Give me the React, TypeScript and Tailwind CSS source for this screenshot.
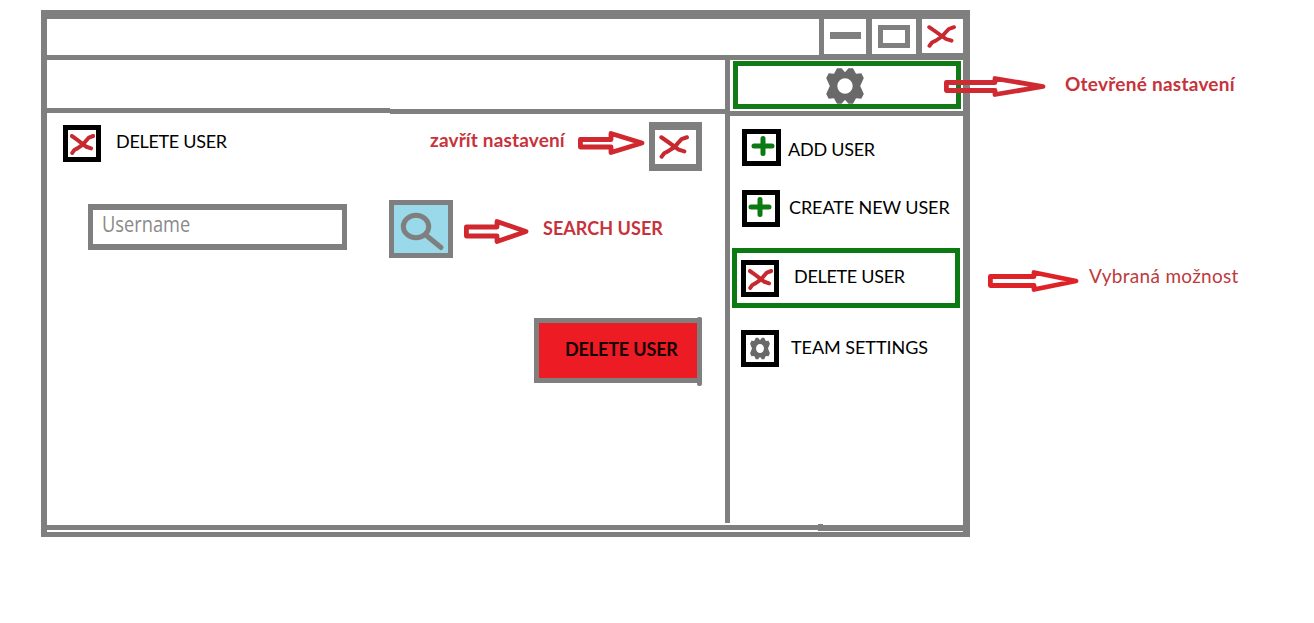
import React from "react";

function XMark({ className, width }: { className: string; width: number }) {
  return (
    <svg viewBox="0 0 29 23" preserveAspectRatio="none" className={className} fill="none" stroke="#c8282f" strokeWidth={width} strokeLinecap="round" strokeLinejoin="round">
      <path d="M2.2 2.200L8.500 6.500L15.500 11.500L19 14L24.500 15.700" />
      <path d="M27 2.200L21.800 4L18.500 7.500L15 11.500L9 15.500L5 17.500L2.500 20.800" />
    </svg>
  );
}

function Plus() {
  return (
    <svg viewBox="0 0 24 20" className="h-5 w-6" fill="none" stroke="#0b7a12" strokeWidth="5" strokeLinecap="round">
      <path d="M3 10H21M12 2.500V17.500" />
    </svg>
  );
}

const quarter = [
  [0, -13.8],
  [3.5, -17.8],
  [8, -17.8],
  [11, -12.2],
  [16.3, -12.8],
  [18.8, -8],
];

const gearPoints = [
  ...quarter,
  [15.2, 0],
  ...quarter.slice(1).reverse().map(([x, y]) => [x, -y]),
  [0, 13.8],
  ...quarter.slice(1).map(([x, y]) => [-x, -y]),
  [-15.2, 0],
  ...quarter.slice(1).reverse().map(([x, y]) => [-x, y]),
]
  .map(([x, y]) => `${20 + x} ${20 + y}`)
  .join("L");

function Gear({ className, hole }: { className: string; hole: number }) {
  return (
    <svg viewBox="1 1 38 38" preserveAspectRatio="none" className={className} fill="#696969" fillRule="evenodd">
      <path d={`M${gearPoints}ZM${20 - hole} 20a${hole} ${hole} 0 1 0 ${hole * 2} 0a${hole} ${hole} 0 1 0 ${-hole * 2} 0Z`} />
    </svg>
  );
}

function Arrow({ width, height, head, top, bottom, color, className }: { width: number; height: number; head: number; top: number; bottom: number; color: string; className: string }) {
  return (
    <svg width={width} height={height} className={`shrink-0 ${className}`} fill="none" stroke={color} strokeWidth="4.8" strokeLinejoin="round">
      <path d={`M2.4 ${top}H${head}V2.500L${width - 3} ${height / 2}L${head} ${height - 2.5}V${bottom}H2.400Z`} />
    </svg>
  );
}

function IconBox({ className, children }: { className: string; children: React.ReactNode }) {
  return <div className={`flex h-[37px] shrink-0 items-center justify-center border-[5px] border-black ${className}`}>{children}</div>;
}

function Label({ className, children }: { className: string; children: React.ReactNode }) {
  return <span className={`block origin-left whitespace-nowrap leading-[20px] ${className}`}>{children}</span>;
}

function TitleBar() {
  return (
    <div className="flex h-[41px] shrink-0 justify-end border-b-[5px] border-[#7f7f7f]">
      <div className="flex h-[36px] border-b border-l-[5px] border-[#7f7f7f]">
        <div className="flex w-[42px] justify-center pt-[13px]">
          <div className="h-[7px] w-[31px] bg-[#7f7f7f]" />
        </div>
        <div className="flex w-[50px] justify-center border-l-[6px] border-[#7f7f7f] pt-[6px]">
          <div className="h-[23px] w-[32px] border-[5px] border-[#7f7f7f]" />
        </div>
        <div className="w-[47px] border-b border-l-[6px] border-[#7f7f7f] pl-[5px] pt-[6px]">
          <XMark className="h-[23px] w-[29px]" width={3.9} />
        </div>
      </div>
    </div>
  );
}

function MainPanel() {
  return (
    <main className="flex w-[678px] flex-col">
      <div className="flex h-[53px] items-end">
        <div className="h-[5px] w-[343px] bg-[#7f7f7f]" />
        <div className="-mb-px h-[5px] flex-1 bg-[#7f7f7f]" />
      </div>
      <div className="flex items-start pl-4 pt-[9px]">
        <IconBox className="mt-[3px] w-[38px] pt-[1px]">
          <XMark className="h-[21px] w-[25px]" width={4.4} />
        </IconBox>
        <Label className="ml-[15px] mt-[9px] w-[314px] text-[18px] tracking-[-0.3px]">DELETE USER</Label>
        <Label className="mt-[8px] w-[148px] text-[19px] font-bold tracking-[0.15px] text-[#c8323a]">zavřít nastavení</Label>
        <Arrow width={67} height={24} head={33} top={8.5} bottom={16} color="#d0282e" className="mt-[9px]" />
        <div className="ml-[4px] h-[49px] w-[53px] border-x-[6px] border-b-[7px] border-t-[8px] border-[#7f7f7f] pl-[4px] pt-[5px]">
          <XMark className="h-[24px] w-[30px]" width={3.9} />
        </div>
      </div>
      <div className="mt-[29px] flex items-start pl-[41px]">
        <div className="mt-[4px] h-[46px] w-[259px] border-x-[5px] border-y-[6px] border-[#7f7f7f] pl-[9px]">
          <span className="block origin-left scale-x-[0.83] font-['Open_Sans','Noto_Sans',sans-serif] text-[22px] leading-[27px] text-[#8a8a8a]">Username</span>
        </div>
        <div className="ml-[42px] h-[58px] w-[64px] border-[5px] border-[#7f7f7f] bg-[#99d9ea]">
          <svg viewBox="0 0 54 48" className="h-[48px] w-[54px]" fill="none" stroke="#7f7f7f" strokeWidth="5">
            <ellipse cx="22" cy="21.500" rx="12.700" ry="11.200" />
            <path d="M33 31L47 42.500" strokeLinecap="round" />
          </svg>
        </div>
        <Arrow width={65} height={25} head={33} top={8} bottom={17} color="#d0282e" className="ml-[11px] mt-[19px]" />
        <Label className="ml-[14px] mt-[18px] text-[18px] font-bold tracking-[0.05px] text-[#c8323a]">SEARCH USER</Label>
      </div>
      <div className="relative ml-[487px] mt-[60px] flex h-[65px] w-[168px] items-start border-[5px] border-[#7f7f7f] bg-[#ed1c24] pl-[26px] pt-[16px]">
        <Label className="text-[18px] font-bold tracking-[-0.15px] text-[#160000]">DELETE USER</Label>
        <div className="absolute -right-[5px] -top-[6px] h-[69px] w-[5px] rounded-[2px] bg-[#7f7f7f]" />
      </div>
    </main>
  );
}

function Sidebar() {
  return (
    <aside className="flex w-[233px] flex-col">
      <div className="h-[51px] pl-[3px] pt-px">
        <div className="flex h-[48px] w-[228px] justify-center border-[5px] border-[#137a18] pt-px">
          <Gear className="-ml-[4px] h-[38px] w-[38px]" hole={7.7} />
        </div>
      </div>
      <div className="h-[5px] shrink-0 bg-[#7f7f7f]" />
      <div className="mt-[13px] flex items-start pl-3">
        <IconBox className="w-[39px] pb-[3px] pl-[2px]">
          <Plus />
        </IconBox>
        <Label className="ml-[7px] mt-[10px] text-[18px] tracking-[-0.25px]">ADD USER</Label>
      </div>
      <div className="mt-[24px] flex items-start pl-3">
        <IconBox className="w-[38px] pb-[3px] pr-[2px]">
          <Plus />
        </IconBox>
        <Label className="ml-[9px] mt-[7px] text-[18px] tracking-[-0.1px]">CREATE NEW USER</Label>
      </div>
      <div className="ml-[2px] mt-[21px] flex h-[60px] w-[228px] items-start border-[5px] border-[#0b7a12] pl-[4px] pt-[7px]">
        <IconBox className="w-[38px] pt-[2px]">
          <XMark className="h-[21px] w-[25px]" width={4.4} />
        </IconBox>
        <Label className="ml-[15px] mt-[6px] text-[18px] tracking-[-0.3px]">DELETE USER</Label>
      </div>
      <div className="mt-[22px] flex items-start pl-[11px]">
        <IconBox className="w-[38px]">
          <Gear className="h-[23px] w-[20px]" hole={7.5} />
        </IconBox>
        <Label className="ml-[12px] mt-[7px] text-[18px] tracking-[-0.05px]">TEAM SETTINGS</Label>
      </div>
    </aside>
  );
}

export default function App() {
  return (
    <div className="flex h-[623px] w-[1314px] items-start overflow-hidden bg-white pl-[41px] pt-[10px] font-['Lato','Noto_Sans',sans-serif] text-black">
      <div className="flex h-[527px] w-[929px] shrink-0 flex-col border-b-[5px] border-l-[6px] border-r-[7px] border-t-[9px] border-[#7f7f7f]">
        <TitleBar />
        <div className="flex h-[465px] shrink-0">
          <MainPanel />
          <div className="h-[463px] w-[5px] bg-[#7f7f7f]" />
          <Sidebar />
        </div>
        <div className="flex h-[7px] shrink-0 items-start">
          <div className="h-[5px] flex-1 bg-[#7f7f7f]" />
          <div className="-mt-px h-[7px] w-[5px] bg-[#7f7f7f]" />
          <div className="h-[6px] w-[140px] bg-[#7f7f7f]" />
        </div>
      </div>
      <div className="relative flex flex-col">
        <div className="-ml-[26px] flex h-[87px] items-start pt-[66px]">
          <Arrow width={102} height={21} head={51} top={6.5} bottom={14.5} color="#cf2a31" className="" />
          <Label className="-mt-[2px] ml-[19px] text-[19px] font-bold tracking-[0.25px] text-[#c8323a]">Otevřené nastavení</Label>
        </div>
        <div className="ml-[18px] mt-[169px] flex items-start">
          <Arrow width={91} height={22} head={46} top={6.5} bottom={15.5} color="#df2228" className="mt-[4px]" />
          <Label className="ml-[10px] text-[19px] tracking-[0.3px] text-[#bd3a3e]">Vybraná možnost</Label>
        </div>
      </div>
    </div>
  );
}
